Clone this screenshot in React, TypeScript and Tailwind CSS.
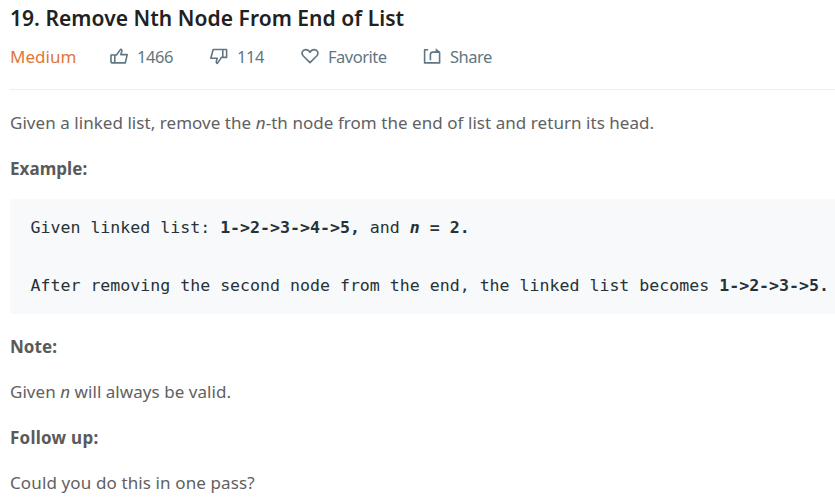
import type { ReactNode } from "react";

const svgProps = {
  fill: "none",
  stroke: "currentColor",
  strokeWidth: 1.6,
  strokeLinejoin: "round" as const,
  className: "block h-[18px] w-[18px] shrink-0",
  viewBox: "0 0 18 18",
};

function ThumbUp() {
  return (
    <svg {...svgProps}>
      <path d="M1 7h3.8v7.9H1.8L1 14.2zM4.8 7h1.7l4.1-5.6c1.2.1 1.5 1 1.2 2.1l-1 3.1h6.4l-1.9 8.3H4.8z" />
    </svg>
  );
}

function ThumbDown() {
  return (
    <svg {...svgProps}>
      <path d="M16.6 9.4h-3.8V1.5h3.8zM12.8 9.4h-1.3l-4.1 6c-1-.3-1.3-1.1-1-2.2l.8-3H.8L3.2 1.5h9.6" />
    </svg>
  );
}

function Heart() {
  return (
    <svg {...svgProps}>
      <path d="M9 14.6 2.3 8C-.2 5.1 1.5 1.6 4.7 1.6c1.9 0 3.3 1 4.3 2.7 1-1.7 2.4-2.7 4.3-2.7 3.2 0 4.9 3.5 2.4 6.4z" />
    </svg>
  );
}

function Share() {
  return (
    <svg {...svgProps}>
      <path d="M5.2 1.7H1.6v13.2h15V4.2M7.4 12.3V6.6c0-1.7.8-2.5 2.5-2.5h6.7" />
      <path d="m12.6.2 4.8 3.9h-4.8z" fill="currentColor" stroke="none" />
    </svg>
  );
}

function Action({ icon, label, className }: { icon: ReactNode; label: string; className: string }) {
  return (
    <button className={`flex items-center gap-[9px] whitespace-nowrap ${className}`}>
      {icon}
      <span>{label}</span>
    </button>
  );
}

export default function App() {
  return (
    <main className="h-[499px] w-[835px] overflow-hidden bg-white pl-[10px] font-['Noto_Sans',sans-serif] text-[17px] tracking-[0.05px] text-[#616161]">
      <h1 className="h-[38px] whitespace-nowrap text-[21px] font-semibold leading-[37px] tracking-[0.05px] text-[#212121]">
        19. Remove Nth Node From End of List
      </h1>
      <div className="flex h-[52px] items-start border-b border-[#eeeeee] leading-[38px] text-[#5f7782]">
        <span className="w-[100px] text-[#e07638]">Medium</span>
        <Action className="w-[100px] text-[16.5px] tracking-[-0.45px]" icon={<ThumbUp />} label="1466" />
        <Action className="w-[91px] text-[16.5px] tracking-[-0.45px]" icon={<ThumbDown />} label="114" />
        <Action className="w-[122px] text-[16.5px] tracking-[-0.5px]" icon={<Heart />} label="Favorite" />
        <Action className="text-[16.5px] tracking-[-0.5px]" icon={<Share />} label="Share" />
      </div>
      <p className="mt-[20px] h-[26px] whitespace-nowrap leading-[26px]">
        Given a linked list, remove the <em>n</em>-th node from the end of list and return its head.
      </p>
      <p className="mt-[20px] h-[26px] font-bold leading-[26px] text-[#5a5a5a]">Example:</p>
      <pre className="mt-[17px] h-[115px] rounded-l bg-[#f7f9fa] pl-[20.5px] pt-[14px] font-['DejaVu_Sans_Mono',monospace] text-[16.58px] leading-[29px] tracking-normal text-[#263238]">
        Given linked list: <b>{"1->2->3->4->5,"}</b> and <b><i>n</i> = 2.</b>{"\n\n"}
        After removing the second node from the end, the linked list becomes <b>{"1->2->3->5."}</b>
      </pre>
      <p className="mt-[20px] h-[26px] font-bold leading-[26px] text-[#5a5a5a]">Note:</p>
      <p className="mt-[19px] h-[26px] leading-[26px]">
        Given <em>n</em> will always be valid.
      </p>
      <p className="mt-[20px] h-[26px] font-bold leading-[26px] tracking-[0.25px] text-[#5a5a5a]">Follow up:</p>
      <p className="mt-[19px] h-[26px] leading-[26px] tracking-[0.12px]">Could you do this in one pass?</p>
    </main>
  );
}
